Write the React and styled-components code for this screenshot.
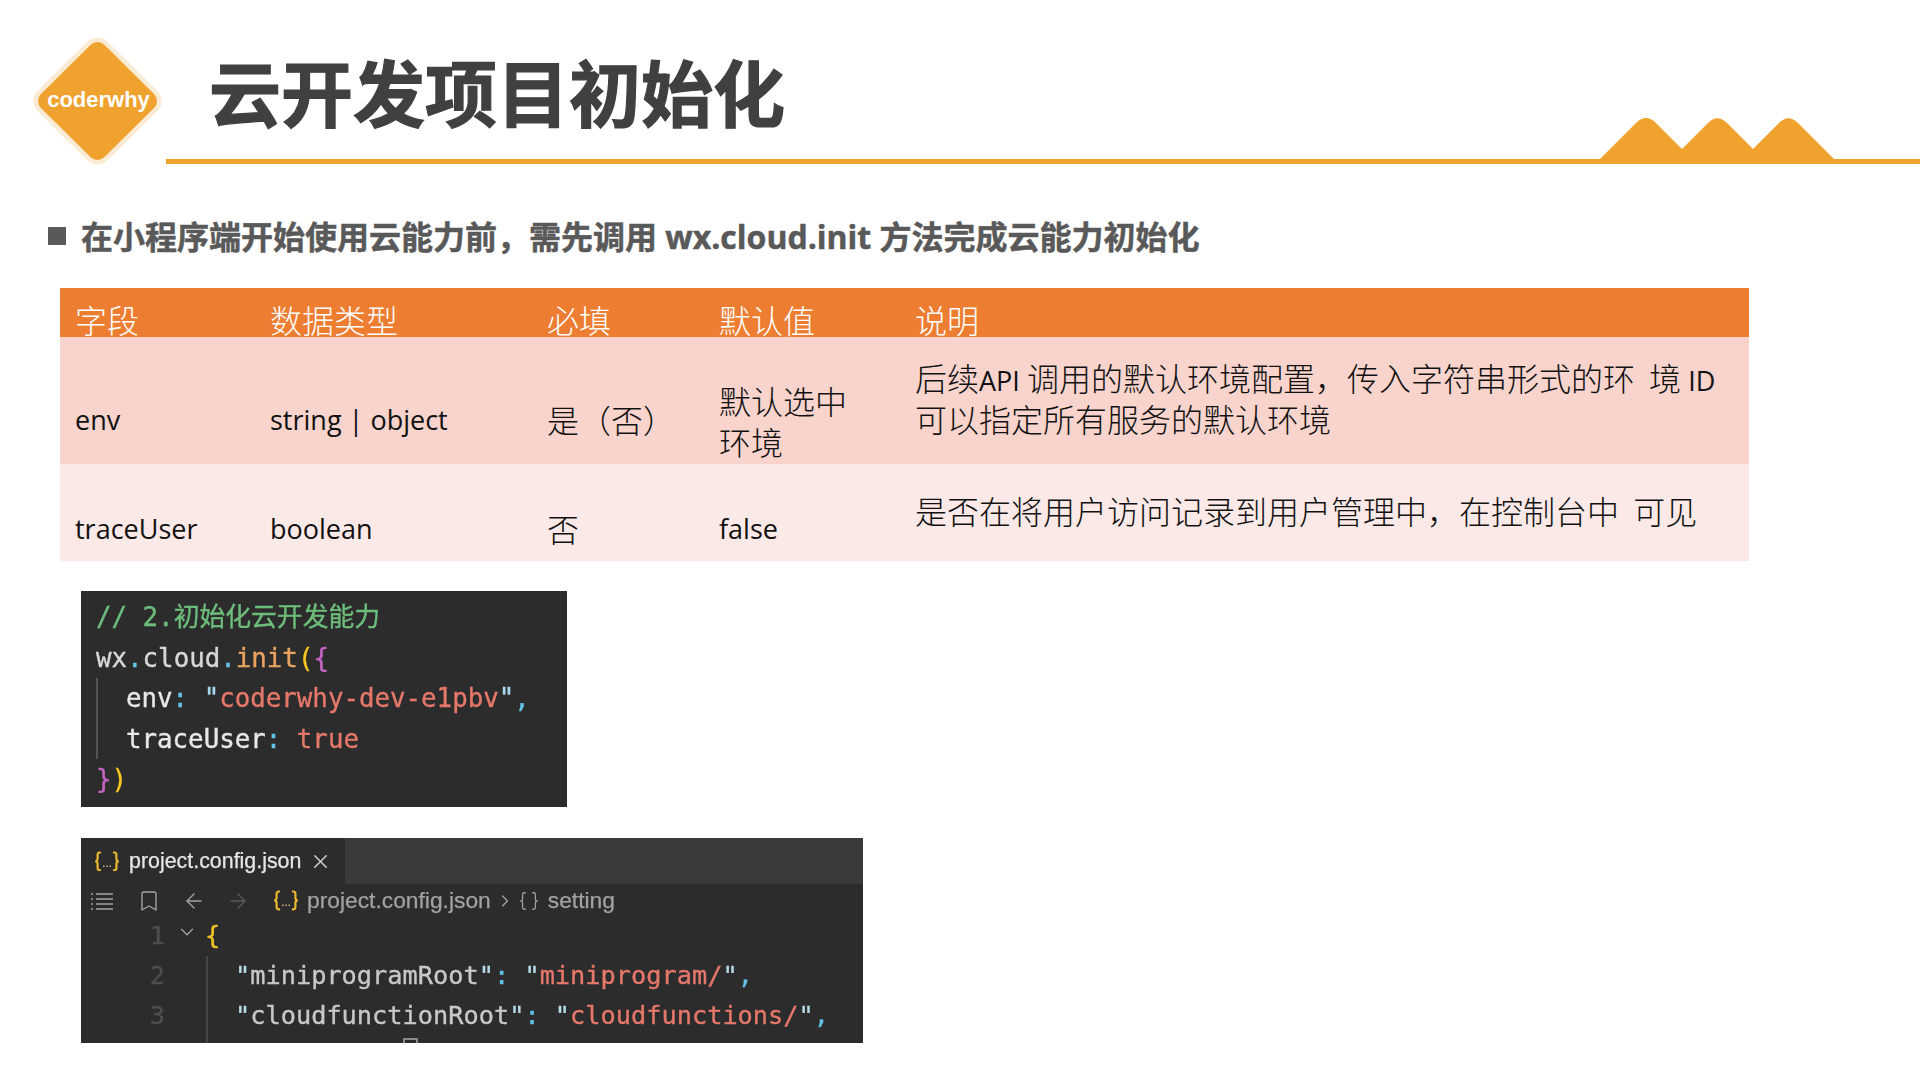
import styled, { createGlobalStyle } from 'styled-components';
import { ArrowLeft, ArrowRight, Bookmark, Braces, ChevronDown, ChevronRight, X } from 'lucide-react';

const CJK = '"Noto Sans CJK SC", sans-serif';
const LATIN = '"Open Sans", "Noto Sans CJK SC", sans-serif';
const MONO = '"DejaVu Sans Mono", "Noto Sans CJK SC", monospace';
const ORANGE = '#efa22e';
const COMMA = '\uFF0C';

const GlobalStyle = createGlobalStyle`
  html, body {
    margin: 0;
    padding: 0;
    background: #fff;
  }
  * {
    box-sizing: border-box;
  }
`;

const Page = styled.div`
  width: 1920px;
  height: 1080px;
  overflow: hidden;
  background: #fff;
  padding-top: 37px;
`;

const Header = styled.header`
  display: flex;
  padding-left: 33px;
`;

const LogoBadge = styled.div`
  position: relative;
  flex: none;
  display: flex;
  align-items: center;
  justify-content: center;
  width: 129px;
  height: 128px;
  margin-right: 4px;
  padding: 0 0 2px 2px;

  svg {
    position: absolute;
    inset: 0;
  }
`;

const LogoText = styled.span`
  position: relative;
  font: 700 22px "Liberation Sans", Arial, sans-serif;
  color: #fff;
`;

const HeaderRight = styled.div`
  flex: 1;
  display: flex;
  flex-direction: column;
`;

const Title = styled.h1`
  margin: 0;
  height: 81px;
  padding-left: 43px;
  font: 700 72px/106px ${CJK};
  color: #404040;
  -webkit-text-stroke: 1.2px #404040;
`;

const RuleRow = styled.div`
  display: flex;
  align-items: flex-end;
  height: 46px;
`;

const Rule = styled.div`
  height: 5px;
  background: ${ORANGE};
  flex: ${(p) => (p.$grow ? 1 : 'none')};
  width: ${(p) => (p.$grow ? 'auto' : '86px')};
`;

const Lead = styled.div`
  display: flex;
  align-items: center;
  gap: 15px;
  height: 48px;
  margin: 48px 0 0 48px;
  font: 700 32px/48px ${LATIN};
  color: #595959;
  white-space: pre;
  -webkit-text-stroke: 0.5px #595959;
`;

const LeadMark = styled.i`
  width: 18px;
  height: 18px;
  background: #595959;
  margin-top: -2px;
`;

const Table = styled.div`
  width: 1689px;
  margin: 27px 0 0 60px;
`;

const Row = styled.div`
  display: grid;
  grid-template-columns: 195px 277px 172px 196px 1fr;
  height: ${(p) => p.$height}px;
  background: ${(p) => p.$bg};
  color: ${(p) => p.$color || '#111'};
`;

const Cell = styled.div`
  display: flex;
  flex-direction: column;
  justify-content: center;
  min-width: 0;
  padding: ${(p) => p.$drop || 0}px 0 ${(p) => p.$rise || 0}px 15px;
  font: 300 32px/41px ${CJK};
  white-space: pre;
`;

const Latin = styled.span`
  font-family: "Open Sans", sans-serif;
  font-weight: 400;
  font-size: 27px;
  line-height: 1;
`;

const CodePanel = styled.div`
  width: 486px;
  height: 216px;
  margin: 30px 0 0 81px;
  padding: 6px 0 0 15px;
  background: #2c2c2c;
  font: 400 25.8px/40.5px ${MONO};
  color: #d8d8d8;
  white-space: pre;
  filter: blur(0.5px);
  -webkit-text-stroke: 0.35px currentColor;
`;

const Indent = styled.div`
  padding-left: 28px;
  border-left: 2px solid #555;
`;

const T = styled.span`
  color: ${(p) => p.$c};
`;

const Editor = styled.div`
  width: 782px;
  height: 205px;
  margin: 31px 0 0 81px;
  overflow: hidden;
  background: #2c2c2c;
  filter: blur(0.5px);
`;

const TabBar = styled.div`
  height: 46px;
  background: #3a3a3a;
`;

const Tab = styled.div`
  display: flex;
  align-items: center;
  width: 264px;
  height: 46px;
  padding-left: 13px;
  background: #2c2c2c;
  font: 400 21.4px "Liberation Sans", Arial, sans-serif;
  color: #e6e6e6;
  -webkit-text-stroke: 0.25px currentColor;

  > svg:first-child {
    margin-right: 9px;
  }
  > svg:last-child {
    margin-left: 8px;
    color: #cfcfcf;
  }
`;

const Crumbs = styled.div`
  display: flex;
  align-items: center;
  height: 36px;
  padding: 0 0 3px 10px;
  font: 400 22.8px "Liberation Sans", Arial, sans-serif;
  color: #a2a2a2;
  -webkit-text-stroke: 0.25px currentColor;
`;

const CrumbIcon = styled.span`
  display: flex;
  flex: none;
  margin-left: ${(p) => p.$gap || 0}px;
  color: ${(p) => p.$c || '#a2a2a2'};
`;

const CrumbLabel = styled.span`
  margin-left: ${(p) => p.$gap}px;
`;

const Line = styled.div`
  display: flex;
  height: ${(p) => p.$height || 40}px;
  font: 400 25.3px/${(p) => p.$lead || p.$height || 40}px ${MONO};
  color: #c8c8c8;
  white-space: pre;
  -webkit-text-stroke: 0.35px currentColor;
`;

const LineNo = styled.span`
  flex: none;
  width: 84px;
  text-align: right;
  color: #4e4e4e;
`;

const Fold = styled.span`
  display: flex;
  flex: none;
  width: 40px;
  padding: 1px 0 0 11px;
  color: #a0a0a0;
  -webkit-text-stroke: 0;
`;

const Guide = styled.div`
  margin-left: 41px;
  padding-left: 27px;
  border-left: 2px solid #464646;
`;

const FoldBox = styled.i`
  display: block;
  width: 15px;
  height: 12px;
  margin: 2px 0 0 168px;
  border: 2px solid #8a8a8a;
`;

const JsonIcon = ({ size = 26 }) => (
  <svg width={size} height={size * 0.8} viewBox="0 0 26 21" fill="none" stroke="#e8b92e" strokeWidth="2.2">
    <path d="M7 1.5H5.5C4 1.5 3.5 2.5 3.5 4v4c0 1.3-.7 2.2-2.2 2.5C2.8 10.8 3.5 11.7 3.5 13v4c0 1.5.5 2.5 2 2.5H7" />
    <path d="M19 1.5h1.5c1.5 0 2 1 2 2.5v4c0 1.3.7 2.2 2.2 2.5-1.5.3-2.2 1.2-2.2 2.5v4c0 1.5-.5 2.5-2 2.5H19" />
    <path d="M9 15.5h1.5M12.3 15.5h1.5M15.5 15.5h1.5" stroke="#c9b27a" strokeWidth="1.5" />
  </svg>
);

const ListIcon = () => (
  <svg width="22" height="18" viewBox="0 0 22 18" fill="none" stroke="#a2a2a2" strokeWidth="1.5">
    <path d="M5 2h17M5 7h17M5 12h17M5 17h17" />
    <path d="M0 2h2M0 7h2M0 12h2M0 17h2" />
  </svg>
);

export default function App() {
  return (
    <Page>
      <GlobalStyle />
      <Header>
        <LogoBadge>
          <svg width="129" height="128" viewBox="0 0 129 128">
            <polygon points="64.5,15 114,64 64.5,113 15,64" fill="#fbebd4" stroke="#fbebd4" strokeWidth="29" strokeLinejoin="round" />
            <polygon points="64.5,15 114,64 64.5,113 15,64" fill={ORANGE} stroke={ORANGE} strokeWidth="20" strokeLinejoin="round" />
          </svg>
          <LogoText>coderwhy</LogoText>
        </LogoBadge>
        <HeaderRight>
          <Title>云开发项目初始化</Title>
          <RuleRow>
            <Rule $grow />
            <svg width="234" height="46" viewBox="0 0 234 46" style={{ flex: 'none' }}>
              <path
                fill={ORANGE}
                d="M0 41L36 5Q46 -5 56 5L82 31L107 6Q117 -5 127 5L153 31L178 6Q188 -5 198 5L234 41V46H0Z"
              />
            </svg>
            <Rule />
          </RuleRow>
        </HeaderRight>
      </Header>

      <Lead>
        <LeadMark />
        <span>在小程序端开始使用云能力前{COMMA}需先调用 wx.cloud.init 方法完成云能力初始化</span>
      </Lead>

      <Table>
        <Row $height={49} $bg="#ed7d31" $color="#fff">
          <Cell $drop={11}>字段</Cell>
          <Cell $drop={11}>数据类型</Cell>
          <Cell $drop={11}>必填</Cell>
          <Cell $drop={11}>默认值</Cell>
          <Cell $drop={11}>说明</Cell>
        </Row>
        <Row $height={127} $bg="#f8d4cc">
          <Cell $drop={38}><Latin>env</Latin></Cell>
          <Cell $drop={38}><Latin>string | object</Latin></Cell>
          <Cell $drop={38}>{'是\uFF08否\uFF09'}</Cell>
          <Cell $drop={40}>默认选中{'\n'}环境</Cell>
          <Cell $rise={5}>
            <span>后续<Latin>API </Latin>调用的默认环境配置{COMMA}传入字符串形式的环  境 <Latin>ID</Latin></span>
            <span>可以指定所有服务的默认环境</span>
          </Cell>
        </Row>
        <Row $height={97} $bg="#fae9e6">
          <Cell $drop={32}><Latin>traceUser</Latin></Cell>
          <Cell $drop={32}><Latin>boolean</Latin></Cell>
          <Cell $drop={32}>否</Cell>
          <Cell $drop={32}><Latin>false</Latin></Cell>
          <Cell $rise={5}>是否在将用户访问记录到用户管理中{COMMA}在控制台中  可见</Cell>
        </Row>
      </Table>

      <CodePanel>
        <div><T $c="#6dbd7c">// 2.初始化云开发能力</T></div>
        <div>
          wx<T $c="#63c3e6">.</T>cloud<T $c="#63c3e6">.</T><T $c="#eba45f">init</T><T $c="#f3c623">(</T><T $c="#c665c4">{'{'}</T>
        </div>
        <Indent>
          <div>
            <T $c="#e8e8e8">env</T><T $c="#63c3e6">: </T><T $c="#a9d8ee">"</T><T $c="#e5776b">coderwhy-dev-e1pbv</T><T $c="#a9d8ee">"</T><T $c="#63c3e6">,</T>
          </div>
          <div>
            <T $c="#e8e8e8">traceUser</T><T $c="#63c3e6">: </T><T $c="#e5776b">true</T>
          </div>
        </Indent>
        <div>
          <T $c="#c665c4">{'}'}</T><T $c="#f3c623">)</T>
        </div>
      </CodePanel>

      <Editor>
        <TabBar>
          <Tab>
            <JsonIcon />
            <span>project.config.json</span>
            <X size={23} strokeWidth={1.5} />
          </Tab>
        </TabBar>
        <Crumbs>
          <ListIcon />
          <CrumbIcon $gap={24}><Bookmark size={24} strokeWidth={1.4} /></CrumbIcon>
          <CrumbIcon $gap={21}><ArrowLeft size={24} strokeWidth={1.4} /></CrumbIcon>
          <CrumbIcon $gap={20} $c="#5a5a5a"><ArrowRight size={24} strokeWidth={1.4} /></CrumbIcon>
          <CrumbIcon $gap={23}><JsonIcon /></CrumbIcon>
          <CrumbLabel $gap={8}>project.config.json</CrumbLabel>
          <CrumbIcon $gap={4}><ChevronRight size={20} strokeWidth={1.5} /></CrumbIcon>
          <CrumbIcon $gap={3}><Braces size={22} strokeWidth={1.4} /></CrumbIcon>
          <CrumbLabel $gap={8}>setting</CrumbLabel>
        </Crumbs>
        <Line $height={36} $lead={32}>
          <LineNo>1</LineNo>
          <Fold><ChevronDown size={22} strokeWidth={1.5} /></Fold>
          <T $c="#f3c623">{'{'}</T>
        </Line>
        <Line>
          <LineNo>2</LineNo>
          <Guide>
            <T $c="#b6d9e8">"</T>miniprogramRoot<T $c="#b6d9e8">"</T><T $c="#63c3e6">: </T><T $c="#b6d9e8">"</T><T $c="#e5776b">miniprogram/</T><T $c="#b6d9e8">"</T><T $c="#63c3e6">,</T>
          </Guide>
        </Line>
        <Line>
          <LineNo>3</LineNo>
          <Guide>
            <T $c="#b6d9e8">"</T>cloudfunctionRoot<T $c="#b6d9e8">"</T><T $c="#63c3e6">: </T><T $c="#b6d9e8">"</T><T $c="#e5776b">cloudfunctions/</T><T $c="#b6d9e8">"</T><T $c="#63c3e6">,</T>
          </Guide>
        </Line>
        <Line $height={8}>
          <LineNo />
          <Guide>
            <FoldBox />
          </Guide>
        </Line>
      </Editor>
    </Page>
  );
}
